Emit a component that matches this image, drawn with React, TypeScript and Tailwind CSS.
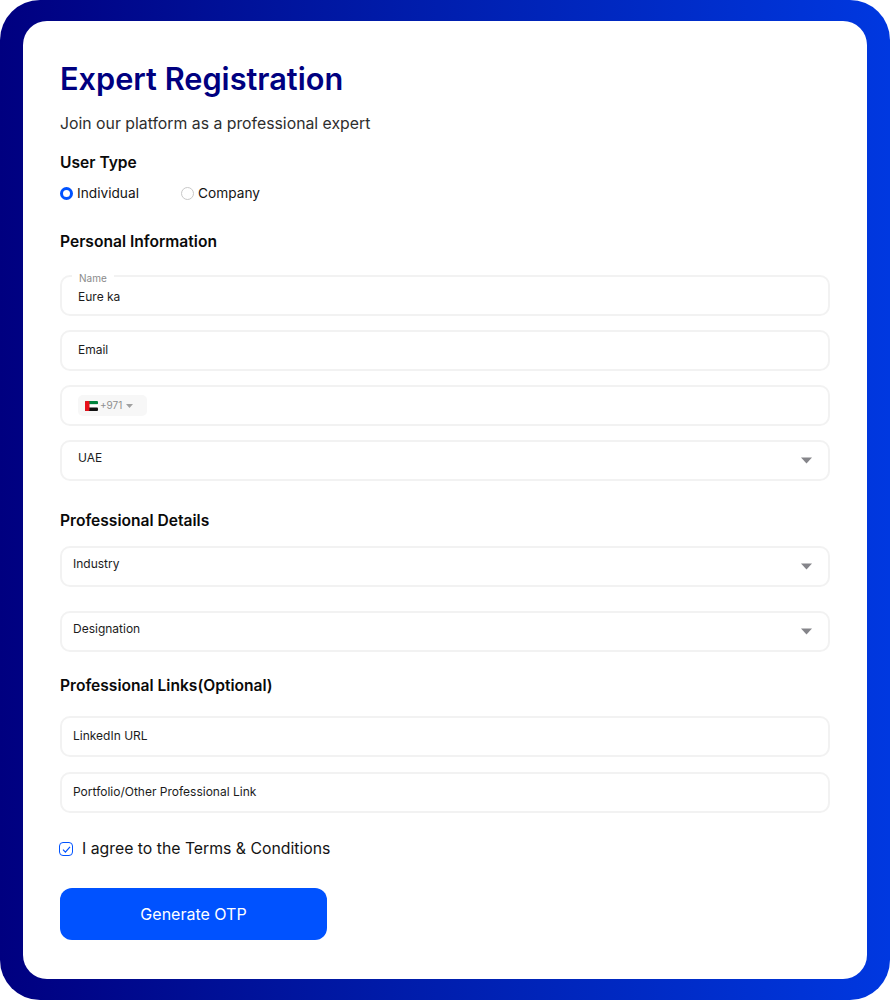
import { ReactNode } from 'react';

const font = { fontFamily: 'Inter, "Noto Sans", sans-serif' };

const Field = ({ children, className = '' }: { children: ReactNode; className?: string }) => (
  <div className={`relative flex h-[41px] items-center rounded-[10px] border-2 border-[#f2f2f2] bg-white ${className}`}>{children}</div>
);

const Caret = () => (
  <svg width="11" height="7" viewBox="0 0 11 7" className="absolute right-[16px] top-[14.5px]">
    <path d="M0 0.5h11L5.5 6.5z" fill="#85858a" />
  </svg>
);

const SelectField = ({ label, pad = 'pl-[11px]', className = '' }: { label: string; pad?: string; className?: string }) => (
  <Field className={className}>
    <span className={`${pad} pb-[5px] text-[12px] text-[#1c1c1c]`}>{label}</span>
    <Caret />
  </Field>
);

const TextField = ({ label, className = '' }: { label: string; className?: string }) => (
  <Field className={className}>
    <span className="pb-[2px] pl-[11px] text-[12px] text-[#1c1c1c]">{label}</span>
  </Field>
);

const Heading = ({ children, className = '' }: { children: ReactNode; className?: string }) => (
  <h2 className={`text-[15.6px] font-semibold leading-[20px] text-[#0a0a0a] ${className}`}>{children}</h2>
);

const UaeFlag = () => (
  <svg width="13" height="10" viewBox="0 0 13 10">
    <rect width="13" height="3.4" rx="1" fill="#00843d" />
    <rect y="3.3" width="13" height="3.4" fill="#ffffff" />
    <rect y="6.6" width="13" height="3.4" rx="1" fill="#111111" />
    <rect width="4.5" height="10" rx="1" fill="#e8101a" />
  </svg>
);

export default function App() {
  return (
    <div className="h-[1000px] w-[890px] bg-white" style={font}>
      <div className="h-full rounded-[40px] bg-gradient-to-r from-[#000080] to-[#0038e0] px-[23px] py-[21px]">
        <div className="h-full rounded-[24px] bg-white px-[37px] pt-[38px]">
          <h1 className="text-[30.7px] font-semibold leading-[40px] text-[#000080]">Expert Registration</h1>
          <p className="mt-[15px] text-[15.8px] leading-[20px] text-[#2e2e2e]">Join our platform as a professional expert</p>

          <Heading className="mt-[19px]">User Type</Heading>
          <div className="mt-[10.5px] flex h-[20px] items-center text-[13.7px] text-[#141414]">
            <span className="h-[13px] w-[13px] rounded-full border-[3px] border-[#0052ff] bg-white" />
            <span className="ml-[4px] w-[104px] pb-[1px]">Individual</span>
            <span className="h-[13px] w-[13px] rounded-full border border-[#c8c8c8] bg-white" />
            <span className="ml-[4px] pb-[1px]">Company</span>
          </div>

          <Heading className="mt-[28.5px]">Personal Information</Heading>

          <Field className="mt-[23px]">
            <span className="absolute left-[10px] top-[-5px] bg-white px-[7px] text-[10px] leading-[12px] text-[#8a8a8a]">Name</span>
            <span className="pl-[16px] pt-[3px] text-[12px] text-[#1c1c1c]">Eure ka</span>
          </Field>
          <Field className="mt-[14px]">
            <span className="pb-[1px] pl-[16px] text-[12px] text-[#1c1c1c]">Email</span>
          </Field>
          <Field className="mt-[14px]">
            <div className="ml-[16px] flex h-[21px] w-[69px] items-center rounded-[5px] bg-[#f7f7f7] pl-[7px]">
              <UaeFlag />
              <span className="ml-[2px] text-[10px] text-[#8f8f8f]">+971</span>
              <svg width="7" height="4" viewBox="0 0 7 4" className="ml-[4px]">
                <path d="M0 0h7L3.5 4z" fill="#a0a0a0" />
              </svg>
            </div>
          </Field>
          <SelectField label="UAE" pad="pl-[16px]" className="mt-[14px]" />

          <Heading className="mt-[30px]">Professional Details</Heading>
          <SelectField label="Industry" className="mt-[15px]" />
          <SelectField label="Designation" className="mt-[24px]" />

          <Heading className="mt-[24px]">Professional Links(Optional)</Heading>
          <TextField label="LinkedIn URL" className="mt-[20px]" />
          <TextField label="Portfolio/Other Professional Link" className="mt-[15px]" />

          <label className="mt-[26px] flex h-[20px] items-center text-[15.8px] text-[#141414]">
            <span className="-ml-[1px] flex h-[14px] w-[14px] items-center justify-center rounded-[4px] border border-[#0052ff] bg-white">
              <svg width="11" height="11" viewBox="0 0 11 11" fill="none">
                <path d="M2 5.6l2.4 2.5L9 2.8" stroke="#0052ff" strokeWidth="1.2" />
              </svg>
            </span>
            <span className="ml-[9px]">I agree to the Terms &amp; Conditions</span>
          </label>

          <button type="button" className="mt-[29px] block h-[52px] w-[267px] rounded-[12px] bg-[#0052ff] text-[16px] font-normal text-white">
            Generate OTP
          </button>
        </div>
      </div>
    </div>
  );
}
